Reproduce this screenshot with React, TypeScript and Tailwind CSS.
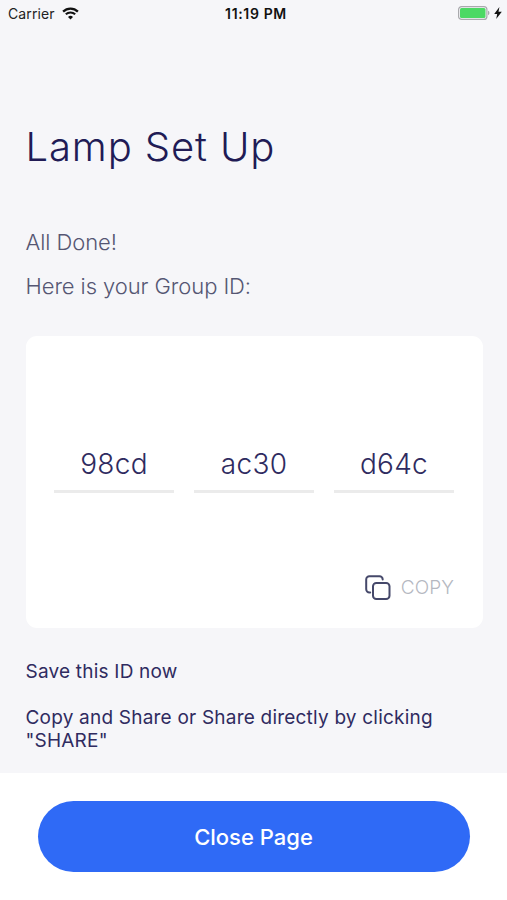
const groupId = ["98cd", "ac30", "d64c"];

function WifiIcon() {
  return (
    <svg width="17" height="13" viewBox="0 0 17 13" fill="none">
      <path d="M1.1 4.6a10.6 10.6 0 0 1 14.8 0" stroke="#111" strokeWidth="2.3" />
      <path d="M3.8 7.3a6.8 6.8 0 0 1 9.4 0" stroke="#111" strokeWidth="2" />
      <path d="M8.5 12.6 6 9.9a3.7 3.7 0 0 1 5 0Z" fill="#111" />
    </svg>
  );
}

function BatteryIcon() {
  return (
    <svg width="32" height="14" viewBox="0 0 32 14" fill="none">
      <rect x="0.6" y="0.6" width="28.3" height="12.8" rx="3" stroke="#a9a9ad" strokeWidth="1.2" />
      <rect x="2" y="2" width="25.5" height="10" rx="1.5" fill="#4cd964" />
      <path d="M30 4.8c1.9.6 1.9 3.8 0 4.4Z" fill="#a9a9ad" />
    </svg>
  );
}

function BoltIcon() {
  return (
    <svg width="8" height="12" viewBox="0 0 8 12" fill="#111">
      <path d="M5.4 0 .2 6.9h3L2.2 12l5.6-7.3H4.5Z" />
    </svg>
  );
}

function CopyIcon() {
  return (
    <svg width="26" height="26" viewBox="0 0 26 26" fill="none" stroke="#45486a" strokeWidth="2" strokeLinecap="round">
      <rect x="8" y="7.9" width="16.5" height="16.2" rx="3.4" />
      <path d="M5.2 17.5H4.4A3.2 3.2 0 0 1 1.2 14.3V4.4A3.2 3.2 0 0 1 4.4 1.2H14.5A3.2 3.2 0 0 1 17.7 4.4" />
    </svg>
  );
}

function StatusBar() {
  return (
    <div className="grid h-[26px] grid-cols-3 items-center pl-2 pr-[5px] text-[14px] text-[#222]">
      <div className="flex items-center gap-[7px]">
        <span className="tracking-[0.1px]">Carrier</span>
        <WifiIcon />
      </div>
      <span className="pl-0.5 text-center font-semibold tracking-[0.65px] text-[#111]">11:19 PM</span>
      <div className="flex items-center justify-end gap-1">
        <BatteryIcon />
        <BoltIcon />
      </div>
    </div>
  );
}

export default function App() {
  return (
    <div className="flex h-[900px] w-full flex-col bg-[#f6f6f9] font-['Inter',sans-serif] text-[#2f2b60]">
      <StatusBar />

      <main className="flex-1 pl-[25.5px] pr-6">
        <h1 className="mt-[97px] text-[40px] font-light leading-[48px] tracking-[0.9px] text-[#211b55]">
          Lamp Set Up
        </h1>

        <div className="mt-[49px] text-[22px] font-light leading-[44px] tracking-[-0.08px] text-[#555673]">
          <p>All Done!</p>
          <p>Here is your Group ID:</p>
        </div>

        <section className="mt-7 flex h-[292px] flex-col rounded-[11px] bg-white pl-[28.5px] pr-[29px]">
          <div className="mt-[107px] grid grid-cols-3 gap-5">
            {groupId.map((part) => (
              <div
                key={part}
                className="h-[50px] border-b-[3px] border-[#ebebeb] text-center text-[28px] font-light leading-[42px] tracking-[0.3px]"
              >
                {part}
              </div>
            ))}
          </div>
          <button type="button" className="mt-[82px] flex items-center gap-2.5 self-end">
            <CopyIcon />
            <span className="text-[19px] font-light leading-[26px] tracking-[0.1px] text-[#b5b8c1]">COPY</span>
          </button>
        </section>

        <div className="mt-8 text-[19px] leading-[23px] tracking-[0.21px]">
          <p>Save this ID now</p>
          <p className="mt-[23px]">Copy and Share or Share directly by clicking "SHARE"</p>
        </div>
      </main>

      <footer className="h-[127px] bg-white px-[37.5px] pt-7">
        <button
          type="button"
          className="h-[71px] w-full rounded-full bg-[#2f6af6] pt-0.5 text-[22px] font-medium text-white"
        >
          Close Page
        </button>
      </footer>
    </div>
  );
}
